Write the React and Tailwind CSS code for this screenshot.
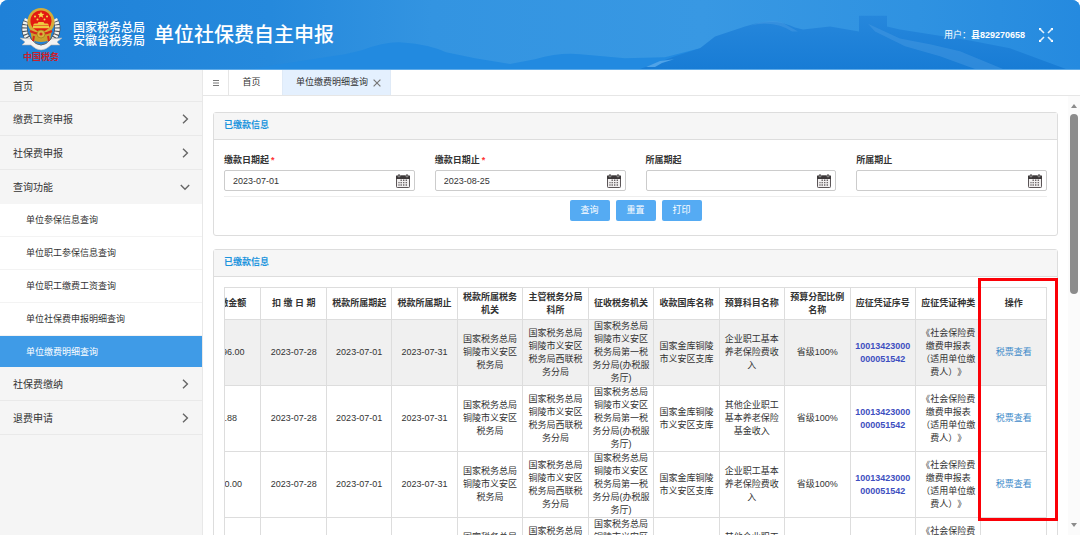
import { useState } from 'react';
import clsx from 'clsx';

const MENU = [
  { label: '首页' },
  { label: '缴费工资申报', expandable: true },
  { label: '社保费申报', expandable: true },
  {
    label: '查询功能',
    expandable: true,
    children: [
      '单位参保信息查询',
      '单位职工参保信息查询',
      '单位职工缴费工资查询',
      '单位社保费申报明细查询',
      '单位缴费明细查询'
    ]
  },
  { label: '社保费缴纳', expandable: true },
  { label: '退费申请', expandable: true }
];

const FIELDS = [
  { id: 'payStart', label: '缴款日期起', required: true, value: '2023-07-01' },
  { id: 'payEnd', label: '缴款日期止', required: true, value: '2023-08-25' },
  { id: 'periodStart', label: '所属期起', value: '' },
  { id: 'periodEnd', label: '所属期止', value: '' }
];

const COLUMNS = [
  '实缴金额',
  '扣 缴 日 期',
  '税款所属期起',
  '税款所属期止',
  '税款所属税务机关',
  '主管税务分局科所',
  '征收税务机关',
  '收款国库名称',
  '预算科目名称',
  '预算分配比例名称',
  '应征凭证序号',
  '应征凭证种类',
  '操作'
];

const ROWS = [
  { id: 1, amount: '2096.00', subject: '企业职工基本养老保险费收入' },
  { id: 2, amount: '1.88', subject: '其他企业职工基本养老保险基金收入' },
  { id: 3, amount: '860.00', subject: '企业职工基本养老保险费收入' },
  { id: 4, amount: '34.46', subject: '其他企业职工基本养老保险基金收入' }
];

function Chevron({ open }) {
  return (
    <svg viewBox="0 0 10 10" className="h-[10px] w-[10px]" fill="none" stroke="#666" strokeWidth="1.4">
      <path d={open ? 'M0.8 3 L5 7.2 L9.2 3' : 'M3 0.8 L7.4 5 L3 9.2'} />
    </svg>
  );
}

function CalendarIcon() {
  return (
    <svg viewBox="0 0 14 14" className="h-[14px] w-[14px]">
      <rect x="0.5" y="2" width="13" height="11.5" rx="0.8" fill="#f1efef" stroke="#5b5557" />
      <rect x="0" y="1.4" width="14" height="3.6" rx="0.6" fill="#3c3839" />
      <rect x="2" y="0" width="2" height="3" rx="1" fill="#3c3839" stroke="#ddd" strokeWidth="0.5" />
      <rect x="10" y="0" width="2" height="3" rx="1" fill="#3c3839" stroke="#ddd" strokeWidth="0.5" />
      <path
        d="M4.5 6.2h1.4M7 6.2h1.4M9.6 6.2H11M2.4 8.6h1.2M4.5 8.6h1.4M7 8.6h1.4M9.6 8.6H11M2.4 11h1.2M4.5 11h1.4M7 11h1.4M9.6 11H11"
        stroke="#6b6567"
        strokeWidth="1.4"
      />
    </svg>
  );
}

function Emblem() {
  return (
    <svg viewBox="0 0 44 58" className="h-[58px] w-[44px]">
      <path d="M8 14 C3 22 6 33 15 38 M36 14 C41 22 38 33 29 38" fill="none" stroke="#4c5660" strokeWidth="6" />
      <path
        d="M8 13 C3 22 6 33 15 38 M36 13 C41 22 38 33 29 38"
        fill="none"
        stroke="#f2f2ee"
        strokeWidth="4.6"
        strokeDasharray="2.2 1.1"
      />
      <path d="M1 32 L12 33 Q17 39 22 39 Q27 39 32 33 L43 32 L38 36 L41 39 L32 39 Q27 44 22 44 Q17 44 12 39 L3 39 L6 36 Z" fill="#f4f4f2" stroke="#aab0b5" strokeWidth="0.6" />
      <path d="M12 33 Q17 39 22 39 Q27 39 32 33" fill="none" stroke="#59636b" strokeWidth="1" />
      <path d="M11 24 L13 34 Q22 38 31 34 L33 24 Z" fill="#c9a02c" />
      <circle cx="22" cy="15.5" r="13.5" fill="#d5ac38" />
      <circle cx="22" cy="15" r="10.6" fill="#e31a12" />
      <path d="M22 5.5l1 2.3 2.4.1-1.9 1.5.7 2.4-2.2-1.4-2.2 1.4.7-2.4-1.9-1.5 2.4-.1z" fill="#f7dc4c" />
      <circle cx="16" cy="10.5" r="1" fill="#f7dc4c" />
      <circle cx="28" cy="10.5" r="1" fill="#f7dc4c" />
      <circle cx="18.5" cy="13.5" r="1" fill="#f7dc4c" />
      <circle cx="25.5" cy="13.5" r="1" fill="#f7dc4c" />
      <path d="M14 19 h16 l-1.5-1.5 h-3 l-1-1.6 h-5 l-1 1.6 h-3 z M14 19.6 h16 v2.6 h-16 z" fill="#efc83f" />
      <path d="M11 25 Q22 31 33 25" fill="none" stroke="#d5281c" strokeWidth="2.4" />
      <circle cx="22" cy="28" r="4" fill="#d9b23c" stroke="#a37b18" strokeWidth="0.7" />
      <circle cx="22" cy="28" r="1.6" fill="#d5281c" />
      <path d="M15 30 L14 35 M29 30 L30 35" stroke="#d5281c" strokeWidth="2" />
      <text x="22" y="54" textAnchor="middle" fontSize="9" fontWeight="700" fill="#c8202c" fontFamily="'Noto Sans CJK SC', sans-serif">
        中国税务
      </text>
    </svg>
  );
}

function HeaderScenery() {
  return (
    <svg viewBox="0 0 1080 70" preserveAspectRatio="none" className="absolute inset-0 h-full w-full">
      <defs>
        <linearGradient id="sky" x1="0" x2="1" y1="0" y2="0">
          <stop offset="0" stopColor="#1f81d8" />
          <stop offset="0.25" stopColor="#2589dc" />
          <stop offset="0.4" stopColor="#3394e1" />
          <stop offset="0.65" stopColor="#3898e3" />
          <stop offset="0.85" stopColor="#2f92e1" />
          <stop offset="1" stopColor="#258adf" />
        </linearGradient>
        <linearGradient id="hill" x1="0" x2="0" y1="0" y2="1">
          <stop offset="0" stopColor="#2687dc" />
          <stop offset="1" stopColor="#187cd5" />
        </linearGradient>
      </defs>
      <rect width="1080" height="70" fill="url(#sky)" />
      <path d="M250 70 Q300 62 345 55 L362 51 Q385 42 402 43 Q430 45 446 53 L475 59 L510 65 L535 60 Q560 53 580 55 L625 59 L665 58 L700 49 L725 38 V70 Z" fill="#228ae0" />
      <path d="M640 70 L675 57 L700 49 L715 37 L745 27 Q775 17 795 28 L803 30 L830 27 L859 32 V16 H887 V27 L900 30 L970 41 L1010 49 L1066 70 Z" fill="url(#hill)" />
      <path d="M750 26 Q775 17 786 25 L798 32 L792 32 Q775 20 750 26Z M868 24 L900 39 L930 45 L960 52 L1003 70 H975 L940 57 L905 47 L875 32 Z" fill="#4a9be3" opacity="0.45" />
      <path d="M646 68 L660 62 L674 60 L662 64 L655 68 Z" fill="#4fa3e8" />
    </svg>
  );
}

function Header() {
  return (
    <header className="relative flex h-[70px] shrink-0 items-center justify-between overflow-hidden rounded-t-lg border-b border-[#5fabe8] bg-[#2b8ee0] text-white">
      <HeaderScenery />
      <div className="relative flex items-center pl-[19px]">
        <Emblem />
        <div className="ml-[10px] text-[12px] leading-[13px] font-medium">
          <p>国家税务总局</p>
          <p>安徽省税务局</p>
        </div>
        <h1 className="ml-[9px] text-[20px] leading-6 font-medium">单位社保费自主申报</h1>
      </div>
      <div className="relative flex items-center gap-[14px] pr-[27px]">
        <span className="text-[9px] leading-3">
          用户：<b className="font-semibold">县829270658</b>
        </span>
        <button type="button" aria-label="全屏">
          <svg viewBox="0 0 14 14" className="h-[14px] w-[14px]" fill="none" stroke="#e6f2fc" strokeWidth="1.6">
            <path d="M1 1 L5 5 M13 1 L9 5 M1 13 L5 9 M13 13 L9 9" />
            <path d="M0 0h2.6L0 2.6z M14 0v2.6L11.4 0z M0 14v-2.6L2.6 14z M14 14h-2.6L14 11.4z" fill="#fff" stroke="none" />
          </svg>
        </button>
      </div>
    </header>
  );
}

function Sidebar({ active, onSelect }) {
  return (
    <nav className="w-[203px] shrink-0 border-r border-[#e8e8e8] bg-[#f5f5f5] text-[#333]">
      <ul>
        {MENU.map((item) => (
          <li key={item.label}>
            <button
              type="button"
              className={clsx(
                'flex w-full items-center justify-between pr-3 pl-[13px] text-[10px]',
                item.expandable ? 'h-[34px]' : 'h-8',
                !item.children && 'border-b border-[#e9e9e9] pt-px'
              )}
            >
              {item.label}
              {item.expandable ? <Chevron open={Boolean(item.children)} /> : null}
            </button>
            {item.children ? (
              <ul className="bg-white">
                {item.children.map((child) => (
                  <li key={child}>
                    <button
                      type="button"
                      onClick={() => onSelect(child)}
                      className={clsx(
                        'flex w-full items-center pt-[2px] pl-[26px] text-[9px]',
                        child === active
                          ? 'h-[31px] bg-[#3f9be7] text-white'
                          : 'h-[33px] border-b border-[#f3f3f3]'
                      )}
                    >
                      {child}
                    </button>
                  </li>
                ))}
              </ul>
            ) : null}
          </li>
        ))}
      </ul>
    </nav>
  );
}

function TabBar() {
  return (
    <div className="flex h-[26px] shrink-0 border-b border-[#e6e6e6] text-[9px] text-[#333]">
      <button type="button" aria-label="菜单" className="flex w-[26px] items-center justify-center border-r border-[#e6e6e6]">
        <svg viewBox="0 0 6 6" className="h-[6px] w-[6px]" stroke="#555" strokeWidth="0.8">
          <path d="M0 0.5h6M0 3h6M0 5.5h6" />
        </svg>
      </button>
      <button type="button" className="w-[53px] pr-2 text-center">首页</button>
      <div className="flex items-center gap-[5px] border-x border-[#dfeaf7] bg-[#e4f0fe] pr-[9px] pl-[13px]">
        <button type="button">单位缴费明细查询</button>
        <button type="button" aria-label="关闭">
          <svg viewBox="0 0 8 8" className="h-2 w-2" stroke="#777" strokeWidth="1.2">
            <path d="M0.6 0.6 L7.4 7.4 M7.4 0.6 L0.6 7.4" />
          </svg>
        </button>
      </div>
    </div>
  );
}

function Panel({ title, children }) {
  return (
    <section className="rounded-[3px] border border-[#ddd] bg-white">
      <h2 className="flex h-[27px] items-center border-b border-[#ddd] bg-[#f6f6f6] px-[10px] text-[9px] font-semibold text-[#1c94dd]">
        {title}
      </h2>
      {children}
    </section>
  );
}

function DateField({ field }) {
  return (
    <div>
      <label htmlFor={field.id} className="mb-[3px] block text-[9px] leading-[13px] font-semibold text-[#333]">
        {field.label}
        {field.required ? <span className="ml-[2px] text-[#f33]">*</span> : null}
      </label>
      <div className="flex h-[21px] items-center rounded-[2px] border border-[#ccc] pr-1">
        <input
          id={field.id}
          type="text"
          defaultValue={field.value}
          className="h-full min-w-0 flex-1 pl-2 text-[9px] text-[#333] outline-none"
        />
        <button type="button" aria-label={`选择${field.label}`}>
          <CalendarIcon />
        </button>
      </div>
    </div>
  );
}

function SearchPanel() {
  return (
    <Panel title="已缴款信息">
      <form className="px-[10px] pt-[14px] pb-[14px]" onSubmit={(event) => event.preventDefault()}>
        <div className="grid grid-cols-4 gap-x-5 border-b border-[#eee] pb-[5px]">
          {FIELDS.map((field) => (
            <DateField key={field.id} field={field} />
          ))}
        </div>
        <div className="mt-[3px] flex justify-center gap-[6px]">
          {['查询', '重置', '打印'].map((label) => (
            <button key={label} type="button" className="h-[21px] w-10 rounded-[2px] bg-[#55abf3] text-[9px] text-white">
              {label}
            </button>
          ))}
        </div>
      </form>
    </Panel>
  );
}

function PaymentTable() {
  const cell = 'border border-[#ddd] px-[3px] py-0';

  return (
    <div className="relative">
      <div className="overflow-hidden border-l border-[#ddd]">
        {/* scrolled to the far right, so the first column is partly hidden */}
        <table className="-ml-[30px] w-[calc(100%+30px)] table-fixed border-collapse text-center text-[9px] leading-[13px] text-[#333]">
          <thead>
            <tr className="h-8">
              {COLUMNS.map((name) => (
                <th key={name} className={clsx(cell, 'font-semibold')}>
                  {name}
                </th>
              ))}
            </tr>
          </thead>
          <tbody>
            {ROWS.map((row, index) => (
              <tr key={row.id} className={clsx('h-[66px]', index === 0 && 'bg-[#f0f0f0]')}>
                <td className={cell}>{row.amount}</td>
                <td className={cell}>2023-07-28</td>
                <td className={cell}>2023-07-01</td>
                <td className={cell}>2023-07-31</td>
                <td className={cell}>国家税务总局铜陵市义安区税务局</td>
                <td className={cell}>国家税务总局铜陵市义安区税务局西联税务分局</td>
                <td className={cell}>国家税务总局铜陵市义安区税务局第一税务分局(办税服务厅)</td>
                <td className={cell}>国家金库铜陵市义安区支库</td>
                <td className={cell}>{row.subject}</td>
                <td className={cell}>省级100%</td>
                <td className={clsx(cell, 'font-semibold break-all text-[#3d4fc0]')}>10013423000000051542</td>
                <td className={clsx(cell, '[text-spacing-trim:space-all]')}>《社会保险费缴费申报表（适用单位缴费人）》</td>
                <td className={cell}>
                  <a href="#ticket" className="text-[#428bca]">税票查看</a>
                </td>
              </tr>
            ))}
          </tbody>
        </table>
      </div>
      <div className="pointer-events-none absolute -top-[9px] -right-[11px] h-[243px] w-20 border-[3px] border-[#fb0007]" />
    </div>
  );
}

function ScrollTrack() {
  return (
    <div className="flex w-3 shrink-0 flex-col items-center bg-[#fbfbfb] py-2">
      <svg viewBox="0 0 6 4" className="h-1 w-[6px]">
        <path d="M3 0 L6 4 H0 Z" fill="#8b8b8b" />
      </svg>
      <div className="mt-[6px] h-[180px] w-2 rounded-full bg-[#8b8b8b]" />
      <svg viewBox="0 0 6 4" className="mt-auto h-1 w-[6px]">
        <path d="M0 0 H6 L3 4 Z" fill="#8b8b8b" />
      </svg>
    </div>
  );
}

export default function App() {
  const [active, setActive] = useState('单位缴费明细查询');

  return (
    <div className="flex h-screen flex-col overflow-hidden bg-white font-['Liberation_Sans','Noto_Sans_CJK_SC',sans-serif]">
      <Header />
      <div className="flex min-h-0 flex-1">
        <Sidebar active={active} onSelect={setActive} />
        <main className="flex min-w-0 flex-1 flex-col">
          <TabBar />
          <div className="flex min-h-0 flex-1">
            <div className="flex min-w-0 flex-1 flex-col gap-[13px] overflow-hidden px-[10px] pt-4">
              <SearchPanel />
              <Panel title="已缴款信息">
                <div className="p-[10px]">
                  <PaymentTable />
                </div>
              </Panel>
            </div>
            <ScrollTrack />
          </div>
        </main>
      </div>
    </div>
  );
}
